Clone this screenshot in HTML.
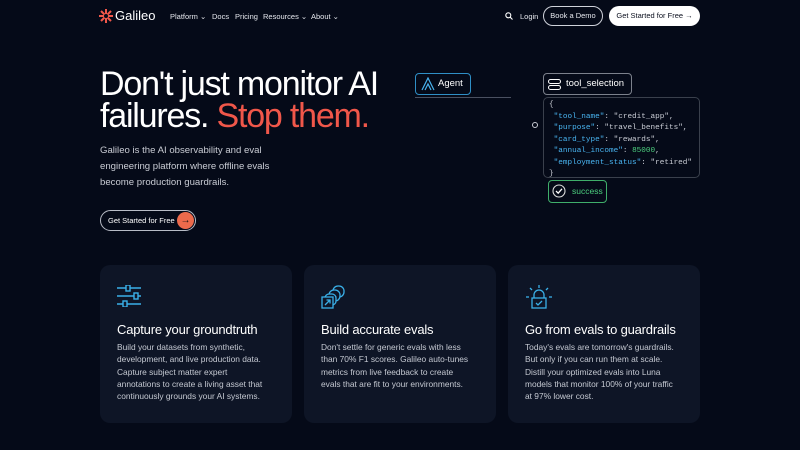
<!DOCTYPE html>
<html><head><meta charset="utf-8"><style>
*{margin:0;padding:0;box-sizing:border-box}
body{width:800px;height:450px;overflow:hidden;background:#050a18;font-family:"Liberation Sans",sans-serif;color:#fff;position:relative}
.a{position:absolute;white-space:nowrap}
.nav{font-size:7.5px;color:#e6e8ee}
.h1{font-size:34px;letter-spacing:-1.2px;line-height:32px;left:100px;top:68px}
.p{font-size:9.6px;line-height:16px;color:#c9ccd4;left:100px;top:143px}
.card{position:absolute;top:265px;width:192px;height:158px;background:#0e1526;border-radius:10px;padding:0 17px}
.card h3{position:absolute;top:57px;left:17px;font-size:13px;font-weight:normal;white-space:nowrap;letter-spacing:-0.2px}
.card p{position:absolute;top:76px;left:17px;font-size:8.4px;line-height:12.3px;color:#c5c9d2;white-space:nowrap}
.card svg{position:absolute;left:17px;top:20px}
.code{font-family:"Liberation Mono",monospace;font-size:7.7px;line-height:11.5px;color:#c9ccd4}
.k{color:#49b4f0}.n{color:#4ccf7e}
</style></head><body>
<svg class="a" style="left:99px;top:9px" width="14" height="14" viewBox="0 0 14 14"><g stroke="#f0574a" stroke-width="2"><line x1="7" y1="0" x2="7" y2="14"/><line x1="0" y1="7" x2="14" y2="7"/><line x1="2" y1="2" x2="12" y2="12"/><line x1="12" y1="2" x2="2" y2="12"/></g><circle cx="7" cy="7" r="2" fill="#050a18"/></svg>
<div class="a" style="left:115px;top:8px;font-size:13px">Galileo</div>
<div class="a nav" style="left:170px;top:12px">Platform ⌄</div>
<div class="a nav" style="left:212px;top:12px">Docs</div>
<div class="a nav" style="left:235px;top:12px">Pricing</div>
<div class="a nav" style="left:263px;top:12px">Resources ⌄</div>
<div class="a nav" style="left:311px;top:12px">About ⌄</div>
<svg class="a" style="left:505px;top:12px" width="8" height="8" viewBox="0 0 8 8"><circle cx="3.3" cy="3.3" r="2.5" stroke="#fff" fill="none" stroke-width="1.1"/><line x1="5.2" y1="5.2" x2="7.5" y2="7.5" stroke="#fff" stroke-width="1.1"/></svg>
<div class="a nav" style="left:520px;top:12px">Login</div>
<div class="a nav" style="left:543px;top:6px;width:60px;height:20px;border:1px solid #cfd2da;border-radius:10px;text-align:center;line-height:18px">Book a Demo</div>
<div class="a nav" style="left:609px;top:6px;width:91px;height:20px;background:#fff;color:#0a0f1e;border-radius:10px;text-align:center;line-height:20px">Get Started for Free <b>→</b></div>

<div class="a h1">Don't just monitor AI<br>failures. <span style="color:#f0574a">Stop them.</span></div>
<div class="a p">Galileo is the AI observability and eval<br>engineering platform where offline evals<br>become production guardrails.</div>
<div class="a" style="left:100px;top:210px;width:96px;height:21px;border:1px solid #b8bcc6;border-radius:11px;font-size:7.5px;line-height:19px;padding-left:7px">Get Started for Free</div>
<div class="a" style="left:177px;top:212px;width:17px;height:17px;border-radius:50%;background:#ec6a4c;color:#111;font-size:10px;line-height:17px;text-align:center;font-weight:bold">→</div>

<div class="a" style="left:415px;top:73px;width:56px;height:22px;border:1px solid #2f8fc6;border-radius:4px;font-size:9.5px;line-height:20px;padding-left:22px">Agent</div>
<svg class="a" style="left:421px;top:77px" width="14" height="14" viewBox="0 0 14 14"><path d="M1 13 L7 1 L13 13 M4 13 L7 7 L10 13" stroke="#49b4f0" fill="none" stroke-width="1.2"/></svg>
<div class="a" style="left:415px;top:97px;width:96px;height:1px;background:#4a5060"></div>
<div class="a" style="left:543px;top:73px;width:89px;height:22px;border:1px solid #7c818c;border-radius:4px;font-size:9.5px;line-height:20px;padding-left:22px">tool_selection</div>
<div class="a" style="left:548px;top:79px;width:13px;height:5px;border:1px solid #fff;border-radius:3px"></div>
<div class="a" style="left:548px;top:85px;width:13px;height:5px;border:1px solid #fff;border-radius:3px"></div>
<div class="a" style="left:532px;top:122px;width:6px;height:6px;border:1px solid #c9ccd4;border-radius:50%"></div>
<div class="a code" style="left:543px;top:97px;width:157px;height:81px;border:1px solid #3a404c;border-radius:5px;padding:2px 5px">{<br>&nbsp;<span class="k">"tool_name"</span>: "credit_app",<br>&nbsp;<span class="k">"purpose"</span>: "travel_benefits",<br>&nbsp;<span class="k">"card_type"</span>: "rewards",<br>&nbsp;<span class="k">"annual_income"</span>: <span class="n">85000</span>,<br>&nbsp;<span class="k">"employment_status"</span>: "retired"<br>}</div>
<div class="a" style="left:548px;top:180px;width:59px;height:23px;border:1px solid #3fae6a;border-radius:4px;font-size:8.5px;line-height:21px;padding-left:23px;color:#4ccf7e">success</div>
<svg class="a" style="left:552px;top:184px" width="14" height="14" viewBox="0 0 14 14"><circle cx="7" cy="7" r="6" stroke="#ddd" fill="none" stroke-width="1.1"/><path d="M4 7 L6.2 9.2 L10 4.8" stroke="#fff" fill="none" stroke-width="1.3"/></svg>

<div class="card" style="left:100px"><svg width="28" height="22" viewBox="0 0 28 22"><g stroke="#3ab0e8" stroke-width="1.4" fill="none"><line x1="0" y1="3" x2="24" y2="3"/><line x1="0" y1="11" x2="24" y2="11"/><line x1="0" y1="19" x2="24" y2="19"/><rect x="9" y="0" width="4" height="6" fill="#0e1526"/><rect x="17" y="8" width="4" height="6" fill="#0e1526"/><rect x="6" y="16" width="4" height="6" fill="#0e1526"/></g></svg><h3>Capture your groundtruth</h3><p>Build your datasets from synthetic,<br>development, and live production data.<br>Capture subject matter expert<br>annotations to create a living asset that<br>continuously grounds your AI systems.</p></div>
<div class="card" style="left:304px"><svg width="28" height="24" viewBox="0 0 28 24"><g stroke="#3ab0e8" stroke-width="1.3" fill="#0e1526"><rect x="12" y="1" width="11" height="11" rx="5"/><rect x="8" y="5" width="11" height="11" rx="5"/><rect x="4" y="9" width="11" height="11" rx="4"/><rect x="1" y="12" width="11" height="11"/><path d="M4 20 L9 15 M5.5 15 H9 V18.5" fill="none"/></g></svg><h3>Build accurate evals</h3><p>Don't settle for generic evals with less<br>than 70% F1 scores. Galileo auto-tunes<br>metrics from live feedback to create<br>evals that are fit to your environments.</p></div>
<div class="card" style="left:508px"><svg width="28" height="26" viewBox="0 0 28 26"><g stroke="#3ab0e8" stroke-width="1.3" fill="none"><line x1="14" y1="0" x2="14" y2="3"/><line x1="5" y1="3" x2="7" y2="5"/><line x1="23" y1="3" x2="21" y2="5"/><line x1="1" y1="12" x2="4" y2="12"/><line x1="24" y1="12" x2="27" y2="12"/><path d="M9 13 V10 a5 5 0 0 1 10 0 V13"/><rect x="7" y="13" width="14" height="10"/><path d="M11 18 L13 20 L17 16"/></g></svg><h3>Go from evals to guardrails</h3><p>Today's evals are tomorrow's guardrails.<br>But only if you can run them at scale.<br>Distill your optimized evals into Luna<br>models that monitor 100% of your traffic<br>at 97% lower cost.</p></div>
</body></html>
